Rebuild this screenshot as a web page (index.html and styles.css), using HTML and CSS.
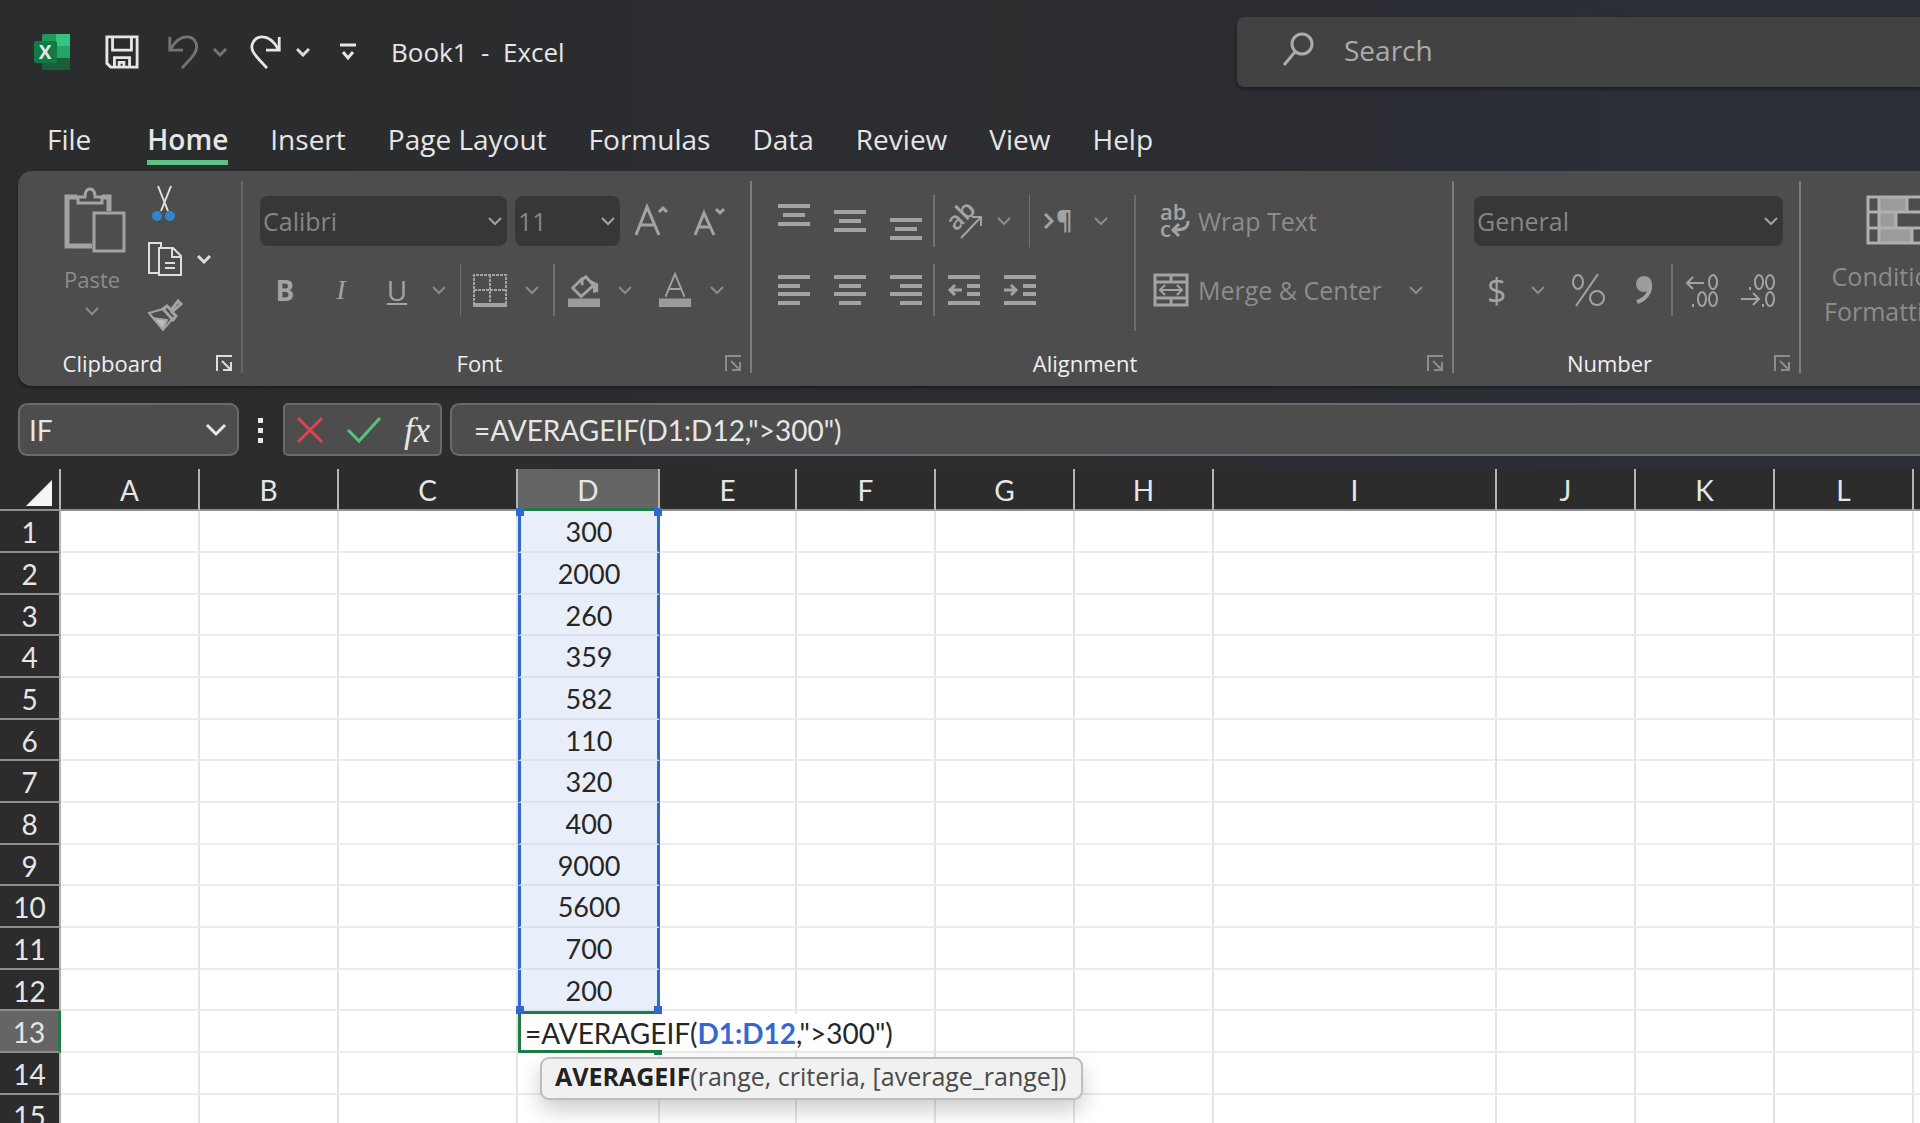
FILE: index.html
```html
<!DOCTYPE html>
<html lang="en">
<head>
    <meta charset="UTF-8">
    <title>Book1 - Excel</title>
    <link rel="stylesheet" href="styles.css">
</head>
<body>
    <svg class="sprite" aria-hidden="true">
        <symbol id="chevron" viewBox="0 0 14 10"><path d="M1 2l6 6 6-6"/></symbol>
        <symbol id="launcher" viewBox="0 0 18 18"><path d="M2 17V2h15M7 7l8 8M16 8v8H8"/></symbol>
    </svg>

    <header class="titlebar">
        <div class="quick">
            <svg class="logo" viewBox="0 0 36 36">
                <rect x="8" y="0" width="28" height="36" rx="2" fill="#1e9a5c"/>
                <rect x="22" y="0" width="14" height="12" fill="#35c481"/>
                <rect x="8" y="24" width="28" height="12" rx="2" fill="#17603a"/>
                <rect x="22" y="12" width="14" height="12" fill="#22a565"/>
                <rect x="0" y="7" width="23" height="22" rx="2" fill="#0f7a42"/>
                <text x="11" y="25" text-anchor="middle" font-size="19" font-weight="700" fill="#fff">X</text>
            </svg>
            <button class="save" aria-label="Save">
                <svg viewBox="0 0 36 36"><path d="M2 2h32v32H6l-4-4zM8 2v14h20V2M10 34V24h16v10M15 34v-5h5v5"/></svg>
            </button>
            <button class="undo dim" aria-label="Undo">
                <svg viewBox="0 0 36 36"><path d="M4 2v14h14M5 15C10 6 16 2 22 2c8 0 13 8 9 16-2 5-8 10-14 17"/></svg>
                <svg class="chev"><use href="#chevron"/></svg>
            </button>
            <button class="redo" aria-label="Redo">
                <svg viewBox="0 0 36 36"><path d="M32 2v14H18M31 15C26 6 20 2 14 2 6 2 1 10 4 17c2 5 9 11 15 18"/></svg>
                <svg class="chev"><use href="#chevron"/></svg>
            </button>
            <button class="customize" aria-label="Customize Quick Access Toolbar">
                <svg viewBox="0 0 16 18"><path d="M0 2h16M3 9l5 6 5-6"/></svg>
            </button>
            <span class="doc">Book1&nbsp; -&nbsp; Excel</span>
        </div>
        <label class="search">
            <svg viewBox="0 0 32 36"><circle cx="20" cy="12" r="10"/><path d="M13 20L2 33"/></svg>
            <input type="text" placeholder="Search">
        </label>
    </header>

    <nav class="tabs">
        <a href="#" class="file">File</a>
        <a href="#" class="active">Home</a>
        <a href="#">Insert</a>
        <a href="#">Page Layout</a>
        <a href="#">Formulas</a>
        <a href="#">Data</a>
        <a href="#">Review</a>
        <a href="#">View</a>
        <a href="#">Help</a>
    </nav>

    <section class="ribbon">
        <div class="group clipboard">
            <div class="clip-tools">
                <button class="big">
                    <svg class="paste" viewBox="0 0 62 68">
                        <path stroke-width="5" d="M13 11H3v49h25M38 11h7v14"/>
                        <path stroke-width="3" d="M14 17v-6h7c0-5 2-8 5-8s5 3 5 8h7v6z"/>
                        <rect x="30" y="27" width="30" height="38" stroke-width="3"/>
                    </svg>
                    <span class="caption">Paste<svg class="chev"><use href="#chevron"/></svg></span>
                </button>
                <div class="clip-list">
                    <button class="lit" aria-label="Cut">
                        <svg viewBox="0 0 36 36"><path d="M11 0l10 25M24 0L14 25"/><circle class="blue" cx="10" cy="30" r="5"/><circle class="blue" cx="23" cy="30" r="5"/></svg>
                    </button>
                    <button class="lit copy" aria-label="Copy">
                        <svg viewBox="0 0 36 36"><path d="M12 32H2V2h12v4M12 7h14l8 8v19H12zM25 7v9h9M18 22h10M18 27h10"/></svg>
                        <svg class="chev"><use href="#chevron"/></svg>
                    </button>
                    <button aria-label="Format Painter">
                        <svg viewBox="0 0 36 36"><path stroke-width="3" d="M16 13l4-3 4 4 7-9 3 3-9 8 4 4-3 4z"/><path d="M16 13L2 17l14 17 10-12M12 28l4-5"/><path fill="#bdbdbd" d="M6 22l14 2-4 9z"/></svg>
                    </button>
                </div>
            </div>
            <footer><span>Clipboard</span><button class="launch lit" aria-label="Clipboard settings"><svg><use href="#launcher"/></svg></button></footer>
        </div>

        <div class="group font">
            <div class="row fields">
                <div class="combo family">
                    <select aria-label="Font"><option>Calibri</option></select>
                    <svg class="chev"><use href="#chevron"/></svg>
                </div>
                <div class="combo size">
                    <select aria-label="Font size"><option>11</option></select>
                    <svg class="chev"><use href="#chevron"/></svg>
                </div>
                <button class="grow" aria-label="Increase font size"><svg viewBox="0 2 34 34"><path d="M1 33L12 5l12 28M5 23h15"/><path d="M24 10l4-4 4 4"/></svg></button>
                <button class="shrink" aria-label="Decrease font size"><svg viewBox="0 2 34 34"><path d="M3 33l9-22 10 22M6 25h12"/><path d="M24 7l4 4 4-4"/></svg></button>
            </div>
            <div class="row">
                <button class="tool"><b>B</b></button>
                <button class="tool"><i>I</i></button>
                <button class="tool split"><u>U</u><svg class="chev"><use href="#chevron"/></svg></button>
                <span class="sep"></span>
                <button class="tool split" aria-label="Borders">
                    <svg class="icon" viewBox="0 0 34 34"><path stroke-dasharray="3 1" d="M1 32V2h32v30M17 2v28M1 17h32"/><path stroke-width="4" d="M0 32h34"/></svg>
                    <svg class="chev"><use href="#chevron"/></svg>
                </button>
                <span class="sep"></span>
                <button class="tool split" aria-label="Fill color">
                    <svg class="icon" viewBox="0 0 34 36"><path stroke-width="3" d="M16 5L5 16l9 9 13-12-8-9-4 3v6M28 13v8"/><path fill="#9b9b9b" d="M25 9l6 3v8l-3-6z"/><rect class="bar" y="27" width="34" height="9"/></svg>
                    <svg class="chev"><use href="#chevron"/></svg>
                </button>
                <button class="tool split" aria-label="Font color">
                    <svg class="icon" viewBox="0 0 34 36"><path d="M7 25L17 1l10 24M10 17h14"/><rect class="bar" y="27" width="34" height="9"/></svg>
                    <svg class="chev"><use href="#chevron"/></svg>
                </button>
            </div>
            <footer><span>Font</span><button class="launch" aria-label="Font settings"><svg><use href="#launcher"/></svg></button></footer>
        </div>

        <div class="group alignment">
            <div class="halves">
                <div class="half">
                    <div class="row">
                        <button class="tool" aria-label="Top align"><svg class="icon lines" viewBox="0 0 34 34"><path d="M1 2h32M6 11h22M1 20h32"/></svg></button>
                        <button class="tool" aria-label="Middle align"><svg class="icon lines" viewBox="0 0 34 34"><path d="M1 8h32M6 17h22M1 26h32"/></svg></button>
                        <button class="tool" aria-label="Bottom align"><svg class="icon lines" viewBox="0 0 34 34"><path d="M1 16h32M6 25h22M1 34h32"/></svg></button>
                        <span class="sep"></span>
                        <button class="tool split" aria-label="Orientation">
                            <svg class="icon" viewBox="0 0 34 34"><text transform="translate(9 28) rotate(-45)" font-size="25" font-weight="600">ab</text><path d="M14 34L34 13M25 13h9v9"/></svg>
                            <svg class="chev"><use href="#chevron"/></svg>
                        </button>
                        <span class="sep wide"></span>
                        <button class="tool split" aria-label="Text direction">
                            <svg class="icon" viewBox="0 0 34 34"><path stroke-width="3" d="M1 10l7 7-7 7"/><text x="12" y="25" font-size="25" font-weight="700">¶</text></svg>
                            <svg class="chev"><use href="#chevron"/></svg>
                        </button>
                    </div>
                    <div class="row">
                        <button class="tool" aria-label="Align left"><svg class="icon lines" viewBox="0 0 34 34"><path d="M1 4h32M1 13h22M1 21h32M1 30h22"/></svg></button>
                        <button class="tool" aria-label="Center"><svg class="icon lines" viewBox="0 0 34 34"><path d="M1 4h32M6 13h22M1 21h32M6 30h22"/></svg></button>
                        <button class="tool" aria-label="Align right"><svg class="icon lines" viewBox="0 0 34 34"><path d="M1 4h32M11 13h22M1 21h32M11 30h22"/></svg></button>
                        <span class="sep"></span>
                        <button class="tool" aria-label="Decrease indent"><svg class="icon lines" viewBox="0 0 34 34"><path d="M1 4h32M20 13h13M20 21h13M1 30h32"/><path d="M15 17H4M8 12l-5 5 5 5"/></svg></button>
                        <button class="tool" aria-label="Increase indent"><svg class="icon lines" viewBox="0 0 34 34"><path d="M1 4h32M20 13h13M20 21h13M1 30h32"/><path d="M1 17h11M8 12l5 5-5 5"/></svg></button>
                    </div>
                </div>
                <div class="half texts">
                    <div class="row">
                        <button class="word"><svg class="icon" viewBox="0 0 34 34"><g font-size="22" font-weight="600"><text x="6" y="16">ab</text><text x="6" y="33">c</text></g><path stroke-width="3" d="M34 17c0 7-4 9-14 9M25 20l-6 6 6 6"/></svg>Wrap Text</button>
                    </div>
                    <div class="row">
                        <button class="word"><svg class="icon" viewBox="0 0 34 34"><path stroke-width="3" d="M1 2h32v30H1zM1 9h32M1 25h32M17 2v7M17 25v7"/><path d="M6 17h22M11 12l-5 5 5 5M23 12l5 5-5 5"/></svg>Merge &amp; Center<svg class="chev"><use href="#chevron"/></svg></button>
                    </div>
                </div>
            </div>
            <footer><span>Alignment</span><button class="launch" aria-label="Alignment settings"><svg><use href="#launcher"/></svg></button></footer>
        </div>

        <div class="group number">
            <div class="row fields">
                <div class="combo format">
                    <select aria-label="Number format"><option>General</option></select>
                    <svg class="chev"><use href="#chevron"/></svg>
                </div>
            </div>
            <div class="row">
                <button class="tool split sign">$<svg class="chev"><use href="#chevron"/></svg></button>
                <button class="tool" aria-label="Percent style"><svg class="icon" viewBox="0 0 34 34"><ellipse cx="7" cy="9" rx="5" ry="7"/><circle cx="26" cy="25" r="7"/><path d="M27 1L5 33"/></svg></button>
                <button class="tool" aria-label="Comma style"><svg class="icon" viewBox="0 0 34 34"><circle class="dot" cx="17" cy="11" r="8"/><path stroke-width="4" d="M23 11c1 8-4 15-13 18"/></svg></button>
                <span class="sep"></span>
                <button class="tool" aria-label="Increase decimal"><svg class="icon" viewBox="0 0 34 34"><path d="M19 10H2M8 4l-6 6 6 6"/><ellipse cx="28" cy="9" rx="4" ry="7"/><ellipse cx="17" cy="26" rx="4" ry="7"/><ellipse cx="28" cy="26" rx="4" ry="7"/><path d="M8 31v3"/></svg></button>
                <button class="tool" aria-label="Decrease decimal"><svg class="icon" viewBox="0 0 34 34"><path d="M0 26h18M12 20l6 6-6 6"/><ellipse cx="18" cy="9" rx="4" ry="7"/><ellipse cx="29" cy="9" rx="4" ry="7"/><ellipse cx="29" cy="26" rx="4" ry="7"/><path d="M9 14v3M22 31v3"/></svg></button>
            </div>
            <footer><span>Number</span><button class="launch" aria-label="Number settings"><svg><use href="#launcher"/></svg></button></footer>
        </div>

        <div class="group styles">
            <button class="big">
                <svg class="cond" viewBox="0 0 64 50"><rect x="14" y="2" width="27" height="15" class="bar"/><rect x="14" y="18" width="16" height="14" class="bar"/><rect x="14" y="34" width="32" height="14" class="bar"/><path stroke-width="3" d="M2 2h60v46H2zM2 17h60M2 33h60M13 2v46M41 2v15M30 17v16M46 33v15"/></svg>
                <span>Conditional<br>Formatting <svg class="chev"><use href="#chevron"/></svg></span>
            </button>
        </div>
    </section>

    <section class="formula-bar">
        <div class="namebox">
            <input type="text" value="IF" aria-label="Name box">
            <svg viewBox="0 0 20 12"><path d="M1 1l9 9 9-9"/></svg>
        </div>
        <span class="grip"></span>
        <div class="entry">
            <button aria-label="Cancel"><svg class="cancel" viewBox="0 0 26 26"><path d="M1 1l24 24M25 1L1 25"/></svg></button>
            <button aria-label="Enter"><svg class="enter" viewBox="0 0 34 26"><path d="M1 13l11 11L33 1"/></svg></button>
            <button class="fx">fx</button>
        </div>
        <input class="formula" type="text" value='=AVERAGEIF(D1:D12,"&gt;300")' aria-label="Formula">
    </section>

    <table class="sheet" id="sheet">
        <colgroup>
            <col class="w-head"><col class="w-m"><col class="w-m"><col class="w-c"><col class="w-d"><col class="w-e">
            <col class="w-m"><col class="w-m"><col class="w-m"><col class="w-i"><col class="w-m"><col class="w-m"><col class="w-m"><col>
        </colgroup>
        <thead>
            <tr>
                <th class="corner"><svg viewBox="0 0 26 26"><path d="M26 0v26H0z"/></svg></th>
                <th>A</th><th>B</th><th>C</th><th class="current">D</th><th>E</th><th>F</th><th>G</th>
                <th>H</th><th>I</th><th>J</th><th>K</th><th>L</th><th></th>
            </tr>
        </thead>
        <tbody></tbody>
    </table>

    <template id="editor">
        <div class="editor">=AVERAGEIF(<b>D1:D12</b>,"&gt;300")</div>
        <div class="hint"><b>AVERAGEIF</b>(range, criteria, [average_range])</div>
    </template>

    <script>
        const values = [300, 2000, 260, 359, 582, 110, 320, 400, 9000, 5600, 700, 200];
        const body = document.querySelector('#sheet tbody');
        const editor = document.getElementById('editor');

        for (let row = 1; row <= 15; row++) {
            const tr = body.insertRow();
            const head = document.createElement('th');
            head.textContent = row;
            tr.appendChild(head);

            for (let col = 1; col <= 13; col++) {
                const td = tr.insertCell();
                if (col !== 4) continue;

                if (row <= values.length) {
                    td.textContent = values[row - 1];
                    td.className = 'range';
                    // handles on the four corners of the range
                    if (row === 1) td.classList.add('first');
                    if (row === values.length) td.classList.add('last');
                } else if (row === 13) {
                    head.className = 'current';
                    td.className = 'editing';
                    td.appendChild(editor.content.cloneNode(true));
                }
            }
        }
    </script>
</body>
</html>
```
FILE: styles.css
```css
* {
    box-sizing: border-box;
}
body {
    margin: 0;
    min-height: 100vh;
    overflow: hidden;
    background: linear-gradient(to right, #2b2c2e 0%, #2b2d30 60%, #2c2e38 85%);
    color: #e6e6e6;
    font-family: "Open Sans", "Noto Sans", sans-serif;
    font-size: 22px;
}
button, input, select {
    margin: 0;
    padding: 0;
    border: none;
    background: none;
    color: inherit;
    font: inherit;
    outline: none;
}
button {
    display: flex;
    align-items: center;
}
svg {
    display: block;
    flex: none;
    overflow: visible;
    fill: none;
    stroke: currentColor;
    stroke-width: 2;
}
svg text {
    fill: currentColor;
    stroke: none;
}
.sprite {
    position: absolute;
    width: 0;
    height: 0;
}
.chev {
    width: 14px;
    height: 10px;
    color: #8c8c8c;
}
.icon {
    width: 34px;
    height: 34px;
}

/* title bar */
.titlebar {
    display: flex;
    align-items: flex-start;
    height: 120px;
    padding-top: 17px;
}
.quick {
    display: flex;
    align-items: center;
    width: 1237px;
    height: 70px;
    padding-left: 34px;
}
.quick svg {
    stroke-width: 3;
}
.quick .logo {
    width: 36px;
    height: 36px;
    margin-right: 35px;
    stroke: none;
}
.quick button svg:first-child {
    width: 34px;
    height: 36px;
}
.quick button {
    gap: 13px;
}
.quick .chev {
    color: #dcdcdc;
}
.save {
    margin-right: 27px;
}
.undo {
    margin-right: 22px;
}
.redo {
    margin-right: 30px;
}
.quick .dim, .quick .dim .chev {
    color: #747474;
}
.quick .customize svg:first-child {
    width: 16px;
    height: 18px;
}
.doc {
    margin-left: 35px;
    font-size: 26px;
}
.search {
    display: flex;
    flex: 1;
    align-items: center;
    gap: 30px;
    height: 70px;
    padding: 0 0 4px 45px;
    border-radius: 7px 0 0 7px;
    background: #424242;
    box-shadow: 0 2px 4px rgba(0, 0, 0, 0.4);
    color: #ababab;
}
.search svg {
    width: 32px;
    height: 36px;
    stroke-width: 3;
}
.search input {
    flex: 1;
    min-width: 0;
    font-size: 28px;
}
.search input::placeholder {
    color: #ababab;
    opacity: 1;
}

/* tabs */
.tabs {
    display: flex;
    gap: 42px;
    height: 51px;
    padding-left: 47px;
}
.tabs a {
    height: 45px;
    color: #e6e6e6;
    font-size: 28px;
    line-height: 38px;
    text-decoration: none;
    white-space: nowrap;
}
.tabs .file {
    margin-right: 14px;
}
.tabs .active {
    border-bottom: 5px solid #5cc183;
    font-weight: 600;
}

/* ribbon */
.ribbon {
    display: flex;
    height: 215px;
    margin-left: 18px;
    padding-top: 10px;
    overflow: hidden;
    border-radius: 14px 0 0 14px;
    background: #4d4d4d;
    box-shadow: 0 2px 3px rgba(0, 0, 0, 0.4);
}
.group {
    display: flex;
    flex: none;
    flex-direction: column;
    height: 192px;
    padding-top: 14px;
    border-right: 2px solid #7d7d7d;
    color: #a3a3a3;
}
.group footer {
    display: flex;
    align-items: center;
    height: 20px;
    margin-top: auto;
    color: #efefef;
    font-weight: 500;
    line-height: 20px;
}
.group footer span {
    flex: 1;
    text-align: center;
}
.launch {
    margin: 0 8px;
    color: #8c8c8c;
}
.launch svg {
    width: 18px;
    height: 18px;
}
.lit, .lit .chev {
    color: #dedede;
}
.clipboard {
    width: 225px;
    padding-top: 5px;
    border-color: #646464;
}
.clip-tools {
    display: flex;
    gap: 21px;
    padding-left: 46px;
}
.big {
    flex-direction: column;
    color: #8c8c8c;
}
.paste {
    width: 62px;
    height: 68px;
    margin-bottom: 10px;
    color: #a3a3a3;
}
.clipboard .big {
    align-items: flex-start;
}
.caption {
    display: flex;
    flex-direction: column;
    align-items: center;
    gap: 12px;
}
.clip-list {
    display: flex;
    flex-direction: column;
    gap: 19px;
}
.clip-list svg:first-child {
    width: 36px;
    height: 36px;
}
.copy {
    gap: 14px;
}
.copy .chev {
    stroke-width: 3;
}
.blue {
    fill: #2e86cf;
    stroke: none;
}
.font {
    width: 509px;
}
.row {
    display: flex;
    align-items: center;
    height: 52px;
    padding-left: 25px;
}
.row + .row {
    margin-top: 17px;
}
.fields {
    padding-left: 17px;
}
.combo {
    display: flex;
    align-items: center;
    height: 50px;
    padding: 0 5px 0 3px;
    border-radius: 8px;
    background: #373737;
    color: #858585;
    font-size: 25px;
}
.combo .chev {
    color: #a3a3a3;
}
.combo select {
    flex: 1;
    min-width: 0;
    appearance: none;
}
.family {
    width: 247px;
    margin-right: 8px;
}
.size {
    width: 105px;
    margin-right: 15px;
}
.format {
    width: 309px;
}
.grow {
    margin-right: 23px;
}
.grow svg, .shrink svg {
    width: 34px;
    height: 34px;
    stroke-width: 3;
}
.tool {
    justify-content: center;
    width: 34px;
    margin-right: 22px;
    font-size: 28px;
}
.tool b, .tool i, .tool u {
    width: 34px;
    text-align: center;
}
.tool i {
    font-family: "Liberation Serif", serif;
}
.split {
    justify-content: space-between;
    width: 66px;
    margin-right: 26px;
}
.sign {
    padding-left: 8px;
    font-size: 34px;
}
.sep {
    width: 2px;
    height: 52px;
    margin: 0 12px 0 -12px;
    background: #727272;
}
.wide {
    margin: 0 14px 0 -8px;
}
.lines {
    stroke-width: 4;
}
.lines path + path {
    stroke-width: 3;
}
.bar, .dot {
    fill: #9b9b9b;
    stroke: none;
}
.alignment {
    width: 702px;
}
.halves {
    display: flex;
}
.half {
    width: 382px;
}
.texts {
    flex: 1;
    height: 136px;
    border-left: 2px solid #6b6b6b;
}
.texts .row {
    padding-left: 18px;
}
.word {
    gap: 10px;
    color: #8c8c8c;
    font-size: 25px;
    white-space: nowrap;
}
.word .icon {
    color: #a3a3a3;
}
.word .chev {
    margin-left: 17px;
}
.number {
    width: 347px;
}
.number .fields {
    padding-left: 20px;
}
.styles {
    border: none;
    padding-left: 23px;
}
.cond {
    width: 64px;
    height: 50px;
    margin-bottom: 14px;
    color: #b0b0b0;
}
.styles span {
    font-size: 25px;
    line-height: 35px;
    white-space: nowrap;
}
.styles .chev {
    display: inline-block;
}

/* formula bar */
.formula-bar {
    display: flex;
    height: 83px;
    padding: 17px 0 13px 18px;
    font-family: Lato, sans-serif;
    font-size: 28px;
}
.namebox, .entry, .formula {
    border: 2px solid #6a6a6a;
    border-radius: 9px;
    background: #4d4d4d;
}
.namebox {
    display: flex;
    align-items: center;
    width: 221px;
    padding: 0 11px 0 9px;
}
.namebox input {
    flex: 1;
    min-width: 0;
}
.namebox svg {
    width: 20px;
    height: 12px;
    stroke-width: 3;
}
.grip {
    width: 5px;
    height: 25px;
    margin: 15px 20px 0 19px;
    background: repeating-linear-gradient(#e6e6e6 0, #e6e6e6 5px, transparent 5px, transparent 10px);
}
.entry {
    display: flex;
    justify-content: space-between;
    width: 159px;
    margin-right: 8px;
    padding: 0 10px 0 12px;
    border-radius: 5px;
}
.cancel {
    width: 26px;
    height: 26px;
    color: #dd4450;
    stroke-width: 3;
}
.enter {
    width: 34px;
    height: 26px;
    color: #54c47c;
    stroke-width: 3;
}
.fx {
    font-family: "Liberation Serif", serif;
    font-size: 36px;
    font-style: italic;
    line-height: 36px;
}
.formula {
    flex: 1;
    min-width: 0;
    padding-left: 22px;
    border-right: none;
    border-radius: 9px 0 0 9px;
}

/* sheet */
.sheet {
    width: 100%;
    table-layout: fixed;
    border-spacing: 0;
    background: #fff;
    color: #262626;
    font-family: Lato, sans-serif;
    font-size: 27px;
    line-height: 30px;
}
.w-head { width: 61px; }
.w-m { width: 139px; }
.w-c { width: 179px; }
.w-d { width: 142px; }
.w-e { width: 137px; }
.w-i { width: 283px; }
.sheet th, .sheet td {
    height: 42px;
    padding: 2px 0 0;
    border-right: 2px solid #e4e4e4;
    border-bottom: 2px solid #ececec;
    text-align: center;
    white-space: nowrap;
}
.sheet tbody tr:nth-child(3n) > * {
    height: 41px;
}
.sheet th {
    border-right-color: #b5b5b5;
    border-bottom-color: #8f8f8f;
    background: #2c2c2c;
    color: #e6e6e6;
    font-size: 28px;
    font-weight: 400;
}
.sheet tr > :last-child {
    border-right: none;
}
.sheet .corner svg {
    width: 26px;
    height: 26px;
    margin: 6px 0 0 26px;
    fill: #f5f5f5;
    stroke: none;
}
.sheet th.current {
    background: #656565;
}
.sheet thead .current {
    border-bottom: 3px solid #1f7a45;
}
.sheet tbody .current {
    border-right: 3px solid #1f7a45;
}
.sheet .range {
    position: relative;
    border-left: 3px solid #2f68cf;
    border-right: 3px solid #2f68cf;
    border-bottom-color: #dce2ee;
    background: #e9effa;
}
.first::before, .first::after, .last::before, .last::after {
    content: "";
    position: absolute;
    top: -3px;
    width: 8px;
    height: 8px;
    background: #2f68cf;
}
.last::before, .last::after {
    top: auto;
    bottom: -5px;
    z-index: 2;
}
.first::before, .last::before {
    left: -5px;
}
.first::after, .last::after {
    right: -5px;
}

/* cell being edited, its text runs over the next columns */
.sheet .editing {
    position: relative;
    border-top: 3px solid #1f7a45;
    border-bottom: 3px solid #1f7a45;
    border-left: 3px solid #1f7a45;
}
.editing::after {
    content: "";
    position: absolute;
    right: -4px;
    bottom: -5px;
    width: 8px;
    height: 8px;
    background: #1f7a45;
}
.editor {
    position: absolute;
    top: 0;
    left: 0;
    z-index: 1;
    height: 36px;
    padding: 0 8px 0 4px;
    background: #fff;
    font-size: 28px;
    line-height: 38px;
}
.editor b {
    color: #3567d2;
}
.hint {
    position: absolute;
    top: 43px;
    left: 19px;
    z-index: 3;
    height: 43px;
    padding: 0 15px 0 13px;
    border: 2px solid #bdbdbd;
    border-radius: 9px;
    background: #f1f1f1;
    box-shadow: 0 10px 22px rgba(0, 0, 0, 0.2);
    color: #4a4a4a;
    font-family: "Open Sans", "Noto Sans", sans-serif;
    font-size: 25px;
    line-height: 35px;
}
.hint b {
    color: #222;
}
```
